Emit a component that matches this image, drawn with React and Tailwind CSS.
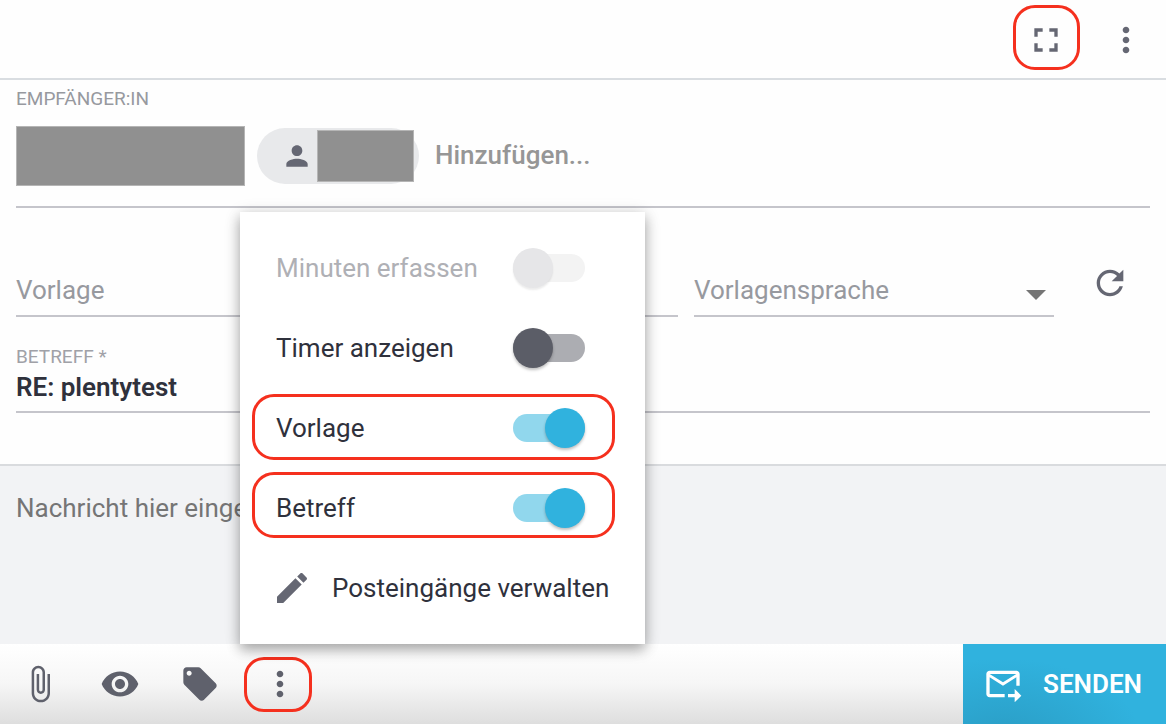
import React from "react";

function Icon({ d, className = "size-10" }) {
  return (
    <svg viewBox="0 0 24 24" fill="currentColor" aria-hidden="true" className={`shrink-0 ${className}`}>
      <path d={d} />
    </svg>
  );
}

const icons = {
  fullscreen: "M7 14H5v5h5v-2H7v-3zm-2-4h2V7h3V5H5v5zm12 7h-3v2h5v-5h-2v3zM14 5v2h3v3h2V5h-5z",
  more: "M12 8c1.1 0 2-.9 2-2s-.9-2-2-2-2 .9-2 2 .9 2 2 2zm0 2c-1.1 0-2 .9-2 2s.9 2 2 2 2-.9 2-2-.9-2-2-2zm0 6c-1.1 0-2 .9-2 2s.9 2 2 2 2-.9 2-2-.9-2-2-2z",
  person: "M12 12c2.21 0 4-1.79 4-4s-1.79-4-4-4-4 1.79-4 4 1.79 4 4 4zm0 2c-2.67 0-8 1.34-8 4v2h16v-2c0-2.66-5.33-4-8-4z",
  refresh: "M17.65 6.35C16.2 4.9 14.21 4 12 4c-4.42 0-7.99 3.58-7.99 8s3.57 8 7.99 8c3.73 0 6.84-2.55 7.73-6h-2.08c-.82 2.33-3.04 4-5.65 4-3.31 0-6-2.69-6-6s2.69-6 6-6c1.66 0 3.14.69 4.22 1.78L13 11h7V4l-2.35 2.35z",
  edit: "M3 17.25V21h3.75L17.81 9.94l-3.75-3.75L3 17.25zM20.71 7.04c.39-.39.39-1.02 0-1.41l-2.34-2.34c-.39-.39-1.02-.39-1.41 0l-1.83 1.83 3.75 3.75 1.83-1.83z",
  attach: "M16.5 6v11.5c0 2.21-1.79 4-4 4s-4-1.79-4-4V5c0-1.38 1.12-2.5 2.5-2.5s2.5 1.12 2.5 2.5v10.5c0 .55-.45 1-1 1s-1-.45-1-1V6H10v9.5c0 1.38 1.12 2.5 2.5 2.5s2.5-1.12 2.5-2.5V5c0-2.21-1.79-4-4-4S7 2.79 7 5v12.5c0 3.04 2.46 5.5 5.5 5.5s5.5-2.46 5.5-5.5V6h-1.5z",
  eye: "M12 4.5C7 4.5 2.73 7.61 1 12c1.73 4.39 6 7.5 11 7.5s9.27-3.11 11-7.5c-1.73-4.39-6-7.5-11-7.5zM12 17c-2.76 0-5-2.24-5-5s2.24-5 5-5 5 2.24 5 5-2.24 5-5 5zm0-8c-1.66 0-3 1.34-3 3s1.34 3 3 3 3-1.34 3-3-1.34-3-3-3z",
  tag: "M21.41 11.58l-9-9C12.05 2.22 11.55 2 11 2H4c-1.1 0-2 .9-2 2v7c0 .55.22 1.05.59 1.42l9 9c.36.36.86.58 1.41.58.55 0 1.05-.22 1.41-.59l7-7c.37-.36.59-.86.59-1.41 0-.55-.23-1.06-.59-1.42zM5.5 7C4.67 7 4 6.33 4 5.5S4.67 4 5.5 4 7 4.67 7 5.5 6.33 7 5.5 7z",
  send: "M20 4H4c-1.1 0-2 .9-2 2v12c0 1.1.9 2 2 2h9v-2H4V8l8 5 8-5v5h2V6c0-1.1-.9-2-2-2zm-8 7L4 6h16l-8 5zm7 4l4 4-4 4v-3h-4v-2h4v-3z",
};

function Highlight({ className }) {
  return <span className={`pointer-events-none absolute border-3 border-[#f5301e] ${className}`} />;
}

function IconButton({ icon, label, children }) {
  return (
    <button type="button" aria-label={label} className="relative flex size-20 items-center justify-center">
      <Icon d={icons[icon]} />
      {children}
    </button>
  );
}

function ToggleRow({ id, label, checked, disabled, highlight }) {
  return (
    <div className="relative flex h-20 items-center justify-between pr-15 pl-9">
      <label htmlFor={id} className={disabled ? "text-[#afb0b5]" : ""}>
        {label}
      </label>
      <input
        id={id}
        type="checkbox"
        role="switch"
        defaultChecked={checked}
        disabled={disabled}
        className="relative h-7 w-18 appearance-none rounded-full bg-[#acadb2] before:absolute before:-top-[6px] before:left-0 before:size-10 before:rounded-full before:bg-[#5b5d67] before:shadow-[0_2px_3px_rgba(0,0,0,0.25)] checked:bg-[#91d7ed] checked:before:left-8 checked:before:bg-[#30b2de] disabled:bg-[#f3f3f3] disabled:before:bg-[#e6e6e8] disabled:before:shadow-[0_2px_2px_rgba(0,0,0,0.08)]"
      />
      {highlight && <Highlight className={`right-[30px] left-3 h-[66px] rounded-[22px] ${highlight}`} />}
    </div>
  );
}

export default function App() {
  return (
    <main className="flex min-h-screen flex-col bg-[#fefefe] font-['Roboto',sans-serif] text-[26px] leading-[30px] text-[#2f313c]">
      <header className="flex h-20 justify-end border-b-2 border-[#d9dde1] text-[#656773]">
        <IconButton icon="fullscreen" label="Vollbild">
          <Highlight className="top-[5px] left-[7px] h-[65px] w-[67px] rounded-[22px]" />
        </IconButton>
        <IconButton icon="more" label="Mehr" />
      </header>

      <section className="px-4 pt-2 pb-[51px]">
        <div className="border-b-2 border-[#c5c5cb] pb-5">
          <label htmlFor="recipient" className="block text-[19px] leading-[22px] text-[#97999f]">
            EMPFÄNGER:IN
          </label>
          <div className="mt-4 flex items-center">
            <div className="h-15 w-[229px] border border-[#b5b5b5] bg-[#909090]" />
            <div className="ml-3 flex h-14 w-[162px] items-center rounded-full bg-[#e8e9eb] pr-[5px] pl-6 text-[#656773]">
              <Icon d={icons.person} className="size-8" />
              <div className="ml-1 h-[52px] flex-1 border border-[#b5b5b5] bg-[#909090]" />
            </div>
            <input
              id="recipient"
              placeholder="Hinzufügen..."
              className="ml-4 min-w-0 flex-1 bg-transparent pb-[2px] font-medium outline-none placeholder:text-[#969696]"
            />
          </div>
        </div>

        <div className="mt-[35px] flex items-center gap-4">
          <div className="flex-1 border-b-2 border-[#c5c5cb] pt-[26px] pb-[10px]">
            <input
              aria-label="Vorlage"
              placeholder="Vorlage"
              className="block h-[30px] w-full bg-transparent outline-none placeholder:text-[#97999f]"
            />
          </div>
          <div className="relative w-[360px] border-b-2 border-[#c5c5cb] pt-[26px] pb-[10px]">
            <select
              aria-label="Vorlagensprache"
              className="block h-[30px] w-full appearance-none bg-transparent text-[#97999f] outline-none"
            >
              <option>Vorlagensprache</option>
            </select>
            <svg viewBox="0 0 20 10" aria-hidden="true" className="pointer-events-none absolute right-2 bottom-[15px] h-[10px] w-5">
              <path d="M0 0h20L10 10z" fill="#757575" />
            </svg>
          </div>
          <div className="text-[#656773]">
            <IconButton icon="refresh" label="Aktualisieren" />
          </div>
        </div>

        <div className="mt-[23px] border-b-2 border-[#c5c5cb] pb-[9px]">
          <label htmlFor="subject" className="block text-[19px] leading-[22px] text-[#a0a1a7]">
            BETREFF *
          </label>
          <input
            id="subject"
            defaultValue="RE: plentytest"
            className="mt-1 block h-[30px] w-full bg-transparent font-semibold outline-none"
          />
        </div>
      </section>

      <textarea
        aria-label="Nachricht"
        placeholder="Nachricht hier eingeben"
        className="block w-full flex-1 resize-none border-t-2 border-[#d9dbde] bg-[#f2f3f5] px-4 pt-[27px] outline-none placeholder:text-[#757575]"
      />

      <footer className="flex h-20 justify-between bg-linear-to-b from-white via-[#f6f6f6] to-[#dedede] text-[#5f616c]">
        <div className="flex">
          <IconButton icon="attach" label="Anhang" />
          <IconButton icon="eye" label="Vorschau" />
          <IconButton icon="tag" label="Tags" />
          <div className="relative">
            <IconButton icon="more" label="Weitere Optionen">
              <Highlight className="top-[13px] left-1 h-[55px] w-[68px] rounded-[20px]" />
            </IconButton>
            <div className="absolute bottom-full left-0 w-[405px] bg-white py-4 text-[#2f313c] shadow-[0_6px_12px_rgba(0,0,0,0.28),0_2px_16px_rgba(0,0,0,0.14)]">
              <ToggleRow id="minutes" label="Minuten erfassen" disabled />
              <ToggleRow id="timer" label="Timer anzeigen" />
              <ToggleRow id="template" label="Vorlage" checked highlight="top-[6px]" />
              <ToggleRow id="subject-toggle" label="Betreff" checked highlight="top-1" />
              <button type="button" className="flex h-20 w-full items-center gap-5 px-8 whitespace-nowrap">
                <span className="text-[#656773]">
                  <Icon d={icons.edit} />
                </span>
                Posteingänge verwalten
              </button>
            </div>
          </div>
        </div>
        <button
          type="button"
          className="flex h-20 items-center gap-5 bg-[#30b2de] bg-[radial-gradient(ellipse_at_20%_120%,#2a9dc5_0%,#30b2de_60%)] pr-6 pl-5 font-semibold text-white"
        >
          <Icon d={icons.send} />
          SENDEN
        </button>
      </footer>
    </main>
  );
}
